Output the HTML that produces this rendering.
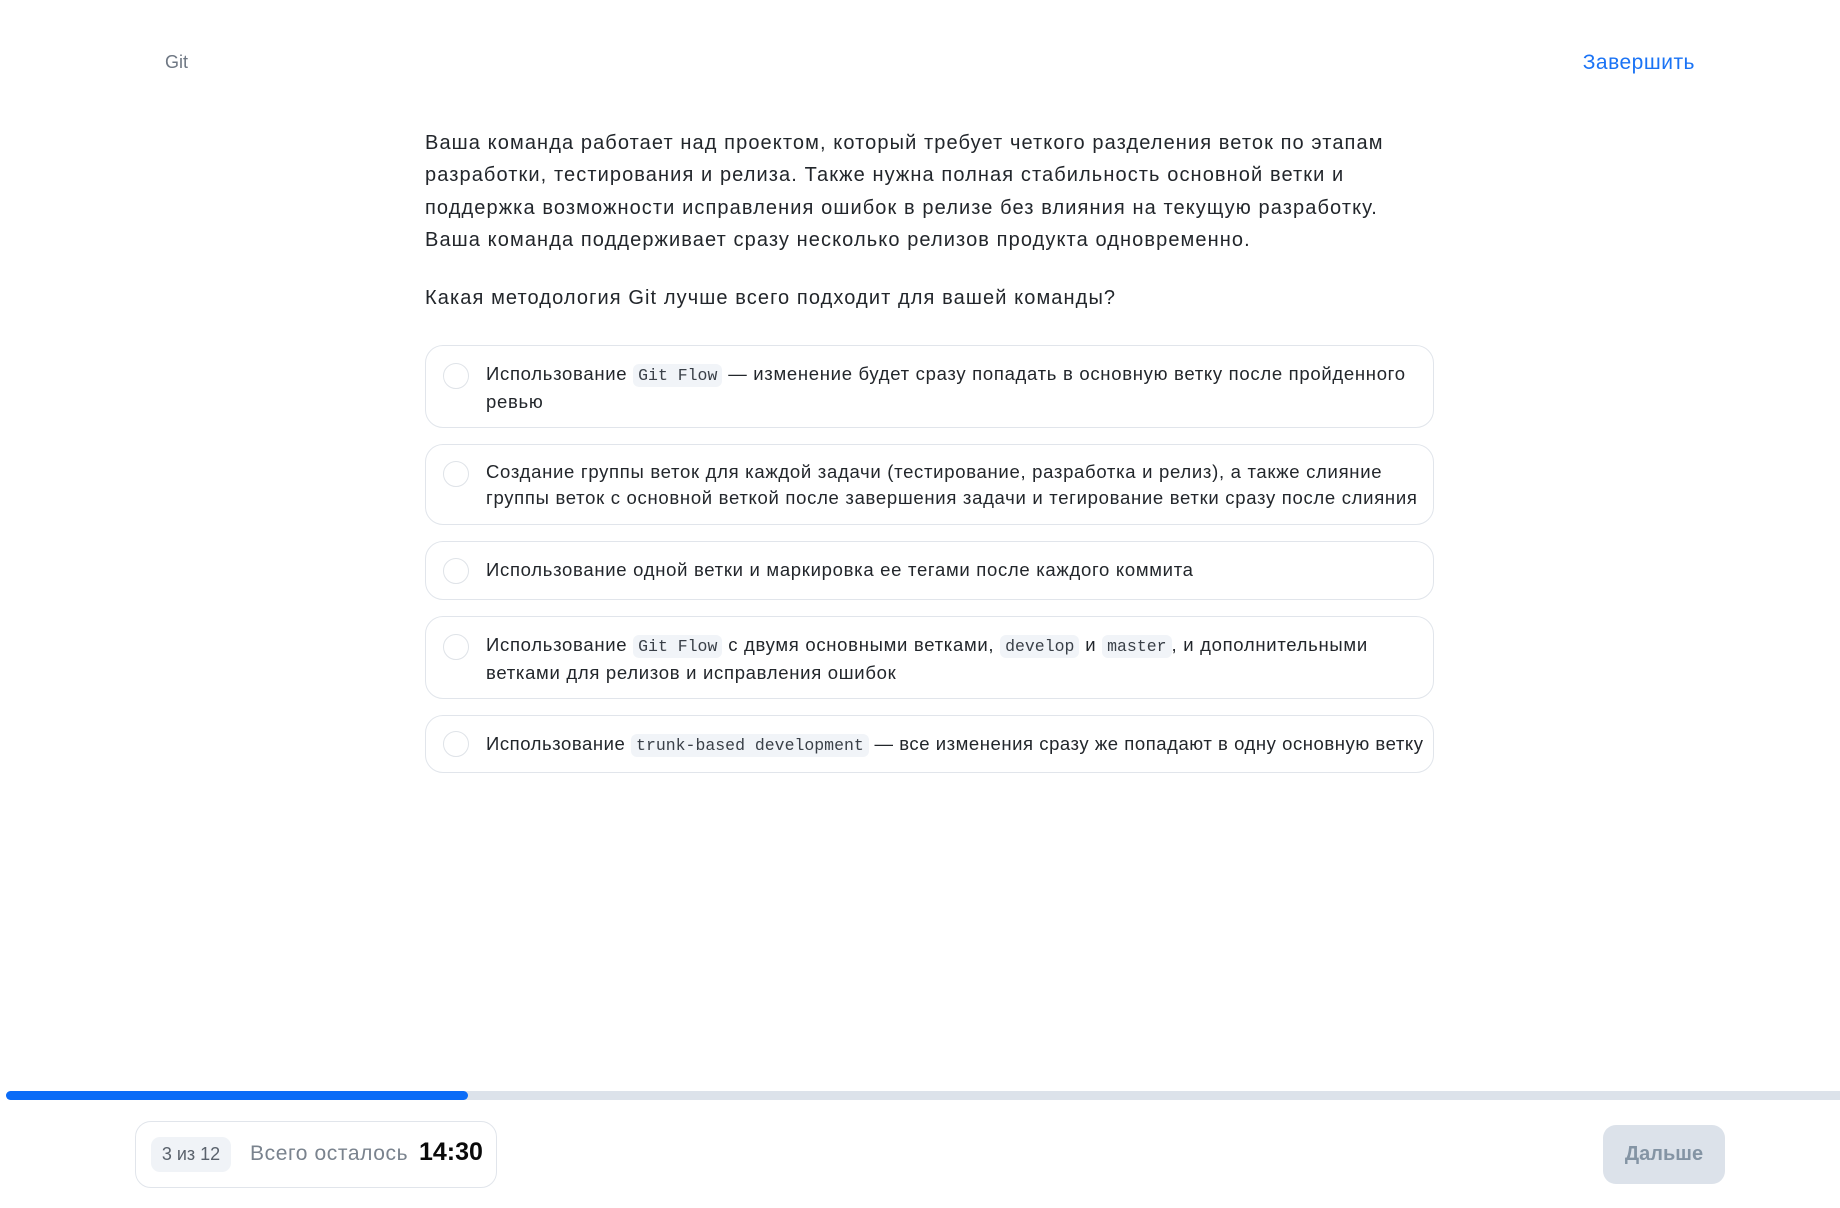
<!DOCTYPE html>
<html><head><meta charset="utf-8"><style>
*{box-sizing:border-box;margin:0;padding:0}
body{width:1840px;height:1208px;background:#fff;font-family:"Liberation Sans",sans-serif;color:#1f2329;position:relative;overflow:hidden}
.a{position:absolute}
.q{left:425px;width:1020px;font-size:20px;line-height:32.3px;color:#22262b;letter-spacing:1.1px}
.opt{position:absolute;left:425px;width:1009px;border:1.5px solid #e1e5eb;border-radius:18px}
.opt .r{position:absolute;left:17px;width:26px;height:26px;border:1.5px solid #dfe3e8;border-radius:50%}
.opt .t{position:absolute;left:60px;right:12px;font-size:18.5px;line-height:26px;color:#22262b;letter-spacing:0.7px}
code{font-family:"Liberation Mono",monospace;font-size:16.5px;background:#f1f4f8;border-radius:6px;padding:2px 5px;color:#3a4048;letter-spacing:0}
</style></head><body>
<div class="a" style="left:165px;top:52px;font-size:18px;color:#6e7783">Git</div>
<div class="a" style="right:145px;top:51px;font-size:21px;color:#1a73f5;letter-spacing:0.5px">Завершить</div>
<div class="a q" style="top:127px">Ваша команда работает над проектом, который требует четкого разделения веток по этапам<br>разработки, тестирования и релиза. Также нужна полная стабильность основной ветки и<br>поддержка возможности исправления ошибок в релизе без влияния на текущую разработку.<br>Ваша команда поддерживает сразу несколько релизов продукта одновременно.</div>
<div class="a q" style="top:282px">Какая методология Git лучше всего подходит для вашей команды?</div>

<div class="opt" style="top:345px;height:83px"><div class="r" style="top:17px"></div><div class="t" style="top:15px">Использование <code>Git Flow</code> — изменение будет сразу попадать в основную ветку после пройденного<br>ревью</div></div>
<div class="opt" style="top:444px;height:81px"><div class="r" style="top:16px"></div><div class="t" style="top:14px">Создание группы веток для каждой задачи (тестирование, разработка и релиз), а также слияние<br>группы веток с основной веткой после завершения задачи и тегирование ветки сразу после слияния</div></div>
<div class="opt" style="top:541px;height:59px"><div class="r" style="top:16px"></div><div class="t" style="top:15px">Использование одной ветки и маркировка ее тегами после каждого коммита</div></div>
<div class="opt" style="top:616px;height:83px"><div class="r" style="top:17px"></div><div class="t" style="top:15px">Использование <code>Git Flow</code> с двумя основными ветками, <code>develop</code> и <code>master</code>, и дополнительными<br>ветками для релизов и исправления ошибок</div></div>
<div class="opt" style="top:715px;height:58px"><div class="r" style="top:15px"></div><div class="t" style="top:15px;white-space:nowrap;letter-spacing:0.55px">Использование <code>trunk-based development</code> — все изменения сразу же попадают в одну основную ветку</div></div>

<div class="a" style="left:6px;top:1091px;width:1840px;height:9px;background:#dce2ea;border-radius:5px"></div>
<div class="a" style="left:6px;top:1091px;width:462px;height:9px;background:#0b6cf7;border-radius:5px"></div>

<div class="a" style="left:135px;top:1121px;width:362px;height:67px;border:1.5px solid #e1e5eb;border-radius:16px">
<div class="a" style="left:15px;top:15px;width:80px;height:35px;background:#f0f3f7;border-radius:9px;font-size:18px;color:#5a626c;text-align:center;line-height:35px">3 из 12</div>
<div class="a" style="left:114px;top:20px;font-size:21px;color:#7a838e;letter-spacing:0.6px">Всего осталось</div>
<div class="a" style="left:283px;top:16px;font-size:25px;color:#0a0a0a;font-weight:bold">14:30</div>
</div>
<div class="a" style="left:1603px;top:1125px;width:122px;height:59px;background:#dce2ea;border-radius:13px;font-size:20px;font-weight:bold;color:#8494a4;text-align:center;line-height:59px">Дальше</div>
</body></html>
